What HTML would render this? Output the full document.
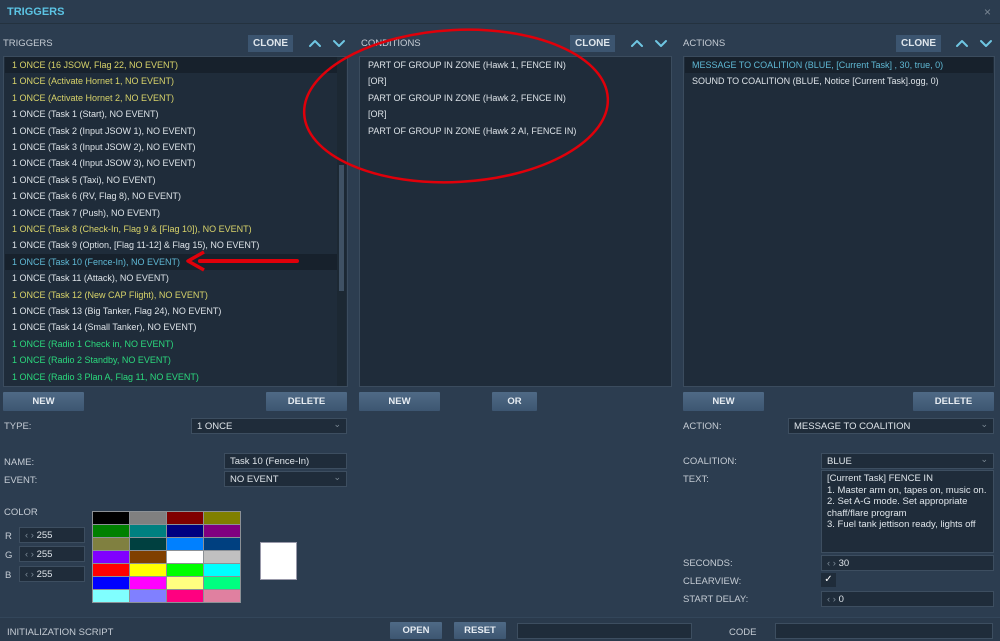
<!DOCTYPE html>
<html><head><meta charset="utf-8"><style>
*{margin:0;padding:0;box-sizing:border-box}
body{width:1000px;height:641px;background:#2c3d50;font-family:"Liberation Sans","DejaVu Sans",sans-serif;font-size:9px;color:#d6dde4;position:relative;overflow:hidden}
.a{position:absolute;white-space:nowrap}
.title{left:0;top:0;width:1000px;height:24px;background:#2b3c4f;border-bottom:1px solid #24323f}
.lbl{color:#c5ccd4;font-size:9.5px}
.list{background:#1f2c3a;border:1px solid #3b4c5e}
.row{position:absolute;left:8px;height:16px;line-height:16px;font-size:9px}
.y{color:#d8d36a}.g{color:#2bd97d}.c{color:#5fb8d4}.w{color:#dde3e8}
.sel{position:absolute;left:1px;right:10px;height:16px;background:#17212c}
.btn{background:linear-gradient(#4f6a86,#3d5671);color:#e6ecf2;font-weight:bold;font-size:9.5px;text-align:center;line-height:19px;height:19px;border-radius:1px}
.clone{background:#3c5570;color:#dfe6ec;font-weight:bold;font-size:10px;text-align:center;line-height:17px;height:17px;width:45px}
.inp{background:#1f2c3a;border:1px solid #3d4e60;height:16px;line-height:15px;padding-left:5px;color:#dfe5ea;font-size:9.5px}
.dd:after{content:"⌄";position:absolute;right:5px;top:-2px;color:#7d8a96;font-size:9px}
.spin{color:#7e8c99}
</style></head><body>
<div class="a title"></div>
<div class="a" style="left:7px;top:6px;color:#5cc4e4;font-weight:bold;font-size:11px">TRIGGERS</div>
<div class="a" style="left:984px;top:5px;color:#7b8895;font-size:12px">×</div>

<div class="a lbl" style="left:3px;top:38px">TRIGGERS</div>
<div class="a clone" style="left:248px;top:35px">CLONE</div>
<div class="a lbl" style="left:361px;top:38px">CONDITIONS</div>
<div class="a clone" style="left:570px;top:35px">CLONE</div>
<div class="a lbl" style="left:683px;top:38px">ACTIONS</div>
<div class="a clone" style="left:896px;top:35px">CLONE</div>

<div class="a list" style="left:3px;top:56px;width:345px;height:331px">
<div class="sel" style="top:0"></div><div class="sel" style="top:197px"></div>
<div style="position:absolute;right:1px;top:0;width:9px;height:329px;background:#1c2833"></div>
<div style="position:absolute;right:3px;top:108px;width:5px;height:126px;background:#3f5164"></div>
<div class="row y" style="top:0">1 ONCE (16 JSOW, Flag 22, NO EVENT)</div>
<div class="row y" style="top:16.4px">1 ONCE (Activate Hornet 1, NO EVENT)</div>
<div class="row y" style="top:32.8px">1 ONCE (Activate Hornet 2, NO EVENT)</div>
<div class="row w" style="top:49.2px">1 ONCE (Task 1 (Start), NO EVENT)</div>
<div class="row w" style="top:65.6px">1 ONCE (Task 2 (Input JSOW 1), NO EVENT)</div>
<div class="row w" style="top:82px">1 ONCE (Task 3 (Input JSOW 2), NO EVENT)</div>
<div class="row w" style="top:98.4px">1 ONCE (Task 4 (Input JSOW 3), NO EVENT)</div>
<div class="row w" style="top:114.8px">1 ONCE (Task 5 (Taxi), NO EVENT)</div>
<div class="row w" style="top:131.2px">1 ONCE (Task 6 (RV, Flag 8), NO EVENT)</div>
<div class="row w" style="top:147.6px">1 ONCE (Task 7 (Push), NO EVENT)</div>
<div class="row y" style="top:164px">1 ONCE (Task 8 (Check-In, Flag 9 &amp; [Flag 10]), NO EVENT)</div>
<div class="row w" style="top:180.4px">1 ONCE (Task 9 (Option, [Flag 11-12] &amp; Flag 15), NO EVENT)</div>
<div class="row c" style="top:196.8px">1 ONCE (Task 10 (Fence-In), NO EVENT)</div>
<div class="row w" style="top:213.2px">1 ONCE (Task 11 (Attack), NO EVENT)</div>
<div class="row y" style="top:229.6px">1 ONCE (Task 12 (New CAP Flight), NO EVENT)</div>
<div class="row w" style="top:246px">1 ONCE (Task 13 (Big Tanker, Flag 24), NO EVENT)</div>
<div class="row w" style="top:262.4px">1 ONCE (Task 14 (Small Tanker), NO EVENT)</div>
<div class="row g" style="top:278.8px">1 ONCE (Radio 1 Check in, NO EVENT)</div>
<div class="row g" style="top:295.2px">1 ONCE (Radio 2 Standby, NO EVENT)</div>
<div class="row g" style="top:311.6px">1 ONCE (Radio 3 Plan A, Flag 11, NO EVENT)</div>
</div>

<div class="a list" style="left:359px;top:56px;width:313px;height:331px">
<div class="row w" style="top:0">PART OF GROUP IN ZONE (Hawk 1, FENCE IN)</div>
<div class="row w" style="top:16.4px">[OR]</div>
<div class="row w" style="top:32.8px">PART OF GROUP IN ZONE (Hawk 2, FENCE IN)</div>
<div class="row w" style="top:49.2px">[OR]</div>
<div class="row w" style="top:65.6px">PART OF GROUP IN ZONE (Hawk 2 AI, FENCE IN)</div>
</div>

<div class="a list" style="left:683px;top:56px;width:312px;height:331px">
<div class="sel" style="top:0;right:1px"></div>
<div class="row c" style="top:0">MESSAGE TO COALITION (BLUE, [Current Task] , 30, true, 0)</div>
<div class="row w" style="top:16.4px">SOUND TO COALITION (BLUE, Notice [Current Task].ogg, 0)</div>
</div>

<div class="a btn" style="left:3px;top:392px;width:81px">NEW</div>
<div class="a btn" style="left:266px;top:392px;width:81px">DELETE</div>
<div class="a btn" style="left:359px;top:392px;width:81px">NEW</div>
<div class="a btn" style="left:492px;top:392px;width:45px">OR</div>
<div class="a btn" style="left:683px;top:392px;width:81px">NEW</div>
<div class="a btn" style="left:913px;top:392px;width:81px">DELETE</div>

<div class="a lbl" style="left:4px;top:421px">TYPE:</div>
<div class="a inp dd" style="left:191px;top:418px;width:156px">1 ONCE</div>
<div class="a lbl" style="left:4px;top:457px">NAME:</div>
<div class="a inp" style="left:224px;top:453px;width:123px">Task 10 (Fence-In)</div>
<div class="a lbl" style="left:4px;top:475px">EVENT:</div>
<div class="a inp dd" style="left:224px;top:471px;width:123px">NO EVENT</div>
<div class="a lbl" style="left:4px;top:507px">COLOR</div>
<div class="a lbl" style="left:5px;top:531px">R</div>
<div class="a lbl" style="left:5px;top:550px">G</div>
<div class="a lbl" style="left:5px;top:570px">B</div>
<div class="a inp" style="left:19px;top:527px;width:66px"><span class="spin">‹ ›</span> 255</div>
<div class="a inp" style="left:19px;top:546px;width:66px"><span class="spin">‹ ›</span> 255</div>
<div class="a inp" style="left:19px;top:566px;width:66px"><span class="spin">‹ ›</span> 255</div>

<div class="a" style="left:92px;top:511px;width:149px;height:92px;background:#8c9196;display:grid;grid-template-columns:repeat(4,1fr);grid-template-rows:repeat(7,1fr);gap:1px;padding:1px">
<div style="background:#000"></div><div style="background:#808080"></div><div style="background:#800000"></div><div style="background:#808000"></div>
<div style="background:#008000"></div><div style="background:#008080"></div><div style="background:#000080"></div><div style="background:#800080"></div>
<div style="background:#808040"></div><div style="background:#004040"></div><div style="background:#0080ff"></div><div style="background:#004080"></div>
<div style="background:#8000ff"></div><div style="background:#804000"></div><div style="background:#fff"></div><div style="background:#c0c0c0"></div>
<div style="background:#f00"></div><div style="background:#ff0"></div><div style="background:#0f0"></div><div style="background:#0ff"></div>
<div style="background:#00f"></div><div style="background:#f0f"></div><div style="background:#ffff80"></div><div style="background:#00ff80"></div>
<div style="background:#80ffff"></div><div style="background:#8080ff"></div><div style="background:#ff0080"></div><div style="background:#e080a0"></div>
</div>
<div class="a" style="left:260px;top:542px;width:37px;height:38px;background:#fff;border:1px solid #99a"></div>

<div class="a lbl" style="left:683px;top:421px">ACTION:</div>
<div class="a inp dd" style="left:788px;top:418px;width:206px">MESSAGE TO COALITION</div>
<div class="a lbl" style="left:683px;top:456px">COALITION:</div>
<div class="a inp dd" style="left:821px;top:453px;width:173px">BLUE</div>
<div class="a lbl" style="left:683px;top:474px">TEXT:</div>
<div class="a inp" style="left:821px;top:470px;width:173px;height:83px;white-space:normal;line-height:11.5px;padding-top:2px">[Current Task] FENCE IN<br>1. Master arm on, tapes on, music on.<br>2. Set A-G mode. Set appropriate chaff/flare program<br>3. Fuel tank jettison ready, lights off</div>
<div class="a lbl" style="left:683px;top:558px">SECONDS:</div>
<div class="a inp" style="left:821px;top:555px;width:173px"><span class="spin">‹ ›</span> 30</div>
<div class="a lbl" style="left:683px;top:576px">CLEARVIEW:</div>
<div class="a" style="left:821px;top:573px;width:15px;height:14px;background:#1f2c3a;color:#fff;font-size:10px;text-align:center;line-height:14px">✓</div>
<div class="a lbl" style="left:683px;top:594px">START DELAY:</div>
<div class="a inp" style="left:821px;top:591px;width:173px"><span class="spin">‹ ›</span> 0</div>

<div class="a" style="left:0;top:617px;width:1000px;height:24px;background:#2a3a4c;border-top:1px solid #33465a"></div>
<div class="a lbl" style="left:7px;top:627px">INITIALIZATION SCRIPT</div>
<div class="a btn" style="left:390px;top:622px;width:52px;height:17px;line-height:17px">OPEN</div>
<div class="a btn" style="left:454px;top:622px;width:52px;height:17px;line-height:17px">RESET</div>
<div class="a inp" style="left:517px;top:623px;width:175px"></div>
<div class="a lbl" style="left:729px;top:627px">CODE</div>
<div class="a inp" style="left:775px;top:623px;width:218px"></div>

<svg class="a" style="left:0;top:0" width="1000" height="641">
<g fill="none" stroke="#6fc6e2" stroke-width="2" stroke-linecap="round" stroke-linejoin="round">
<path d="M310 46 L315 41 L320 46"/><path d="M334 41 L339 46 L344 41"/>
<path d="M632 46 L637 41 L642 46"/><path d="M656 41 L661 46 L666 41"/>
<path d="M957 46 L962 41 L967 46"/><path d="M981 41 L986 46 L991 41"/>
</g>
<ellipse cx="456" cy="106" rx="152" ry="76" fill="none" stroke="#e0000a" stroke-width="2.5" transform="rotate(-3 456 106)"/>
<line x1="297" y1="261" x2="200" y2="261" stroke="#e0000a" stroke-width="4" stroke-linecap="round"/>
<path d="M204 252 L188 261 L204 270" fill="none" stroke="#e0000a" stroke-width="3.5" stroke-linejoin="round"/>
</svg>
</body></html>
